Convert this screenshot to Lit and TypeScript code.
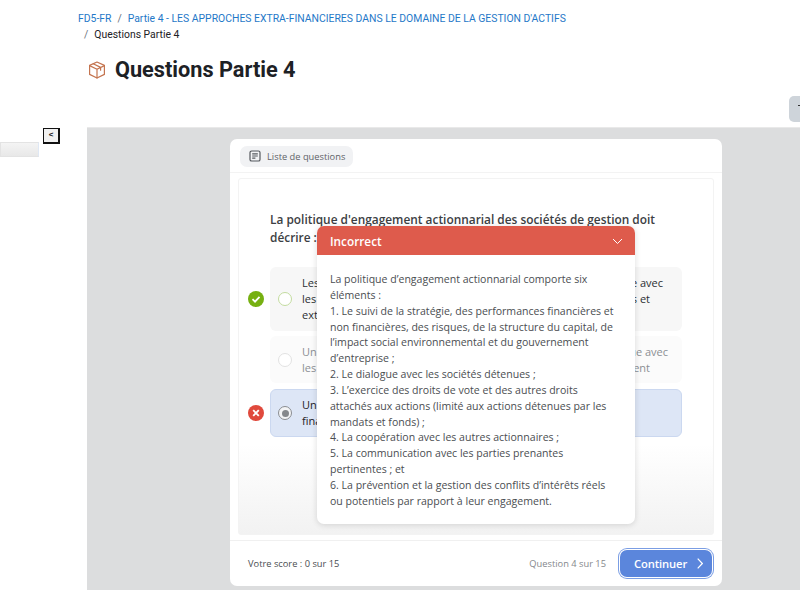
import { LitElement, html, css } from "lit";
import { customElement } from "lit/decorators.js";

@customElement("app-root")
export class AppRoot extends LitElement {
  static styles = css`
    :host { display: block; width: 800px; height: 590px; overflow: hidden; background: #fff; font-family: "Open Sans", "Noto Sans", sans-serif; color: #1d2125; }
    * { box-sizing: border-box; }
    .top { height: 127px; display: flex; flex-direction: column; }
    .crumbs { padding: 11px 0 0 78px; font-family: "Roboto", "Open Sans", sans-serif; font-size: 10.4px; line-height: 16px; }
    .crumbs a { color: #1f78c8; text-decoration: none; }
    .crumbs .sep { color: #6a737b; margin: 0 6px; }
    .crumbs .second { padding-left: 6px; color: #1d2125; }
    .crumbs .second .sep { margin: 0 6px 0 0; }
    .title { display: flex; align-items: center; gap: 9px; margin: 13px 0 0 88px; height: 28px; }
    .title svg { width: 18px; height: 18px; flex: none; margin-top: -1px; }
    h1 { margin: 0; font-family: "Roboto", "Open Sans", sans-serif; font-size: 21.7px; line-height: 28px; font-weight: 700; color: #1d2125; }
    .tools { display: flex; justify-content: flex-end; margin-top: 12px; }
    .toolbtn { width: 11px; height: 26px; background: #ced4da; border-radius: 5px 0 0 5px; display: flex; align-items: center; justify-content: flex-end; padding-bottom: 8px; }
    .toolbtn i { display: block; width: 2px; height: 1px; background: #333; }
    .main { display: flex; height: 463px; }
    .left { width: 87px; flex: none; display: flex; flex-direction: column; padding-top: 1px; }
    .collapse { width: 17px; height: 16px; margin-left: 43px; border: 1px solid #111; border-width: 1px 2px 2px 1px; background: #f1f1f1; font-size: 8px; line-height: 12px; text-align: center; color: #111; font-family: "Liberation Sans", sans-serif; font-weight: 700; }
    .bar { width: 39px; height: 15px; margin-top: -2px; background: linear-gradient(#f4f4f4, #e8e8e8); border: 1px solid #e3e3e3; border-right-color: #dfe8f5; }
    .frame { flex: 1; background: #dcddde; border-top: 1px solid #e9e9e9; padding: 11px 78px 0 143px; }
    .card { position: relative; width: 492px; height: 447px; background: #fff; border-radius: 7px; display: flex; flex-direction: column; }
    .head { height: 34px; flex: none; padding: 6px 10px 0; border-bottom: 1px solid #f3f3f3; }
    .pill { display: inline-flex; align-items: center; gap: 6px; height: 21px; width: 113px; padding-left: 9px; background: #f1f2f4; border-radius: 7px; font-size: 9.3px; color: #5f6368; }
    .pill svg { width: 12px; height: 12px; flex: none; }
    .body { height: 357px; margin: 5px 8px 0; border: 1px solid #f3f3f3; border-radius: 3px; background: linear-gradient(#fff 0, #fff 265px, #f2f2f2 100%); padding: 31px 31px 0 9px; flex: none; }
    .q { margin: 0 0 21px 22px; font-size: 11.88px; line-height: 18px; font-weight: 600; color: #3c4043; width: 400px; }
    .row { display: flex; align-items: center; gap: 6px; margin-bottom: 5px; }
    .row svg.st { width: 16px; height: 16px; flex: none; }
    .spacer { width: 16px; flex: none; }
    .opt { flex: 1; display: flex; align-items: center; gap: 10px; padding: 0 12px 0 8px; border-radius: 6px; background: #f7f7f7; font-size: 11px; line-height: 16px; color: #2c2f33; }
    .opt.o1 { height: 64px; }
    .opt.o2 { height: 47px; background: #fbfbfb; color: #8b8f94; }
    .opt.o3 { height: 48px; background: #dde6f6; border: 1px solid #cbd8f0; color: #1d2125; padding-left: 7px; margin-top: 1px; }
    .radio { width: 14px; height: 14px; border-radius: 50%; border: 1px solid #c3dc9f; flex: none; background: #fff; }
    .o2 .radio { border-color: #e2e2e2; }
    .o3 .radio { border: 1.5px solid #8a8d91; display: flex; align-items: center; justify-content: center; background: #f3f4f6; }
    .o3 .radio i { display: block; width: 7px; height: 7px; border-radius: 50%; background: #85888c; }
    .lines { flex: 1; }
    .line { display: flex; justify-content: space-between; height: 16px; }
    .pr2 { padding-right: 2px; }
    .pr7 { padding-right: 7px; }
    .pr20 { padding-right: 20px; }
    .foot { flex: 1; display: flex; align-items: center; padding: 0 10px 0 18px; font-size: 9.3px; color: #4a4d51; margin-top: 5px; border-top: 1px solid #f0f0f0; }
    .foot .count { margin-left: auto; margin-right: 14px; color: #85888c; }
    .btn { width: 92px; height: 27px; border-radius: 7px; box-shadow: 0 0 0 1px #fff, 0 0 0 2px #7b9ee4; background: #5b86dc; color: #fff; font-size: 11.2px; font-weight: 600; display: flex; align-items: center; padding-left: 14px; gap: 10px; letter-spacing: -0.1px; }
    .btn svg { width: 6px; height: 11px; }
    .pop { position: absolute; left: 87px; top: 87px; width: 318px; height: 298px; background: #fff; border-radius: 7px; box-shadow: 0 1px 6px rgba(0,0,0,0.14); overflow: hidden; }
    .pop .ph { height: 29px; background: #de5b4c; color: #fff; display: flex; align-items: center; justify-content: space-between; padding: 1px 12px 0 13px; font-size: 11.8px; font-weight: 600; }
    .pop .ph svg { width: 11px; height: 7px; }
    .pop .pb { padding: 17px 16px 0 13px; font-size: 10.55px; line-height: 15.85px; color: #4a4d51; }
  `;

  render() {
    return html`
      <div class="top">
        <div class="crumbs">
          <div><a>FD5-FR</a><span class="sep">/</span><a>Partie 4 - LES APPROCHES EXTRA-FINANCIERES DANS LE DOMAINE DE LA GESTION D'ACTIFS</a></div>
          <div class="second"><span class="sep">/</span>Questions Partie 4</div>
        </div>
        <div class="title">
          <svg viewBox="0 0 18 18" fill="none" stroke="#c4744f" stroke-width="1.2" stroke-linejoin="round" stroke-linecap="round">
            <path d="M9 1 16.4 4.4V13.4L9 17 1.6 13.4V4.4Z"/>
            <path d="M1.6 4.6 9 8.2 16.4 4.6M9 8.2V17M5.2 2.8 12.6 6.4V9.2"/>
          </svg>
          <h1>Questions Partie 4</h1>
        </div>
        <div class="tools"><div class="toolbtn"><i></i></div></div>
      </div>
      <div class="main">
        <div class="left">
          <div class="collapse">&lt;</div>
          <div class="bar"></div>
        </div>
        <div class="frame">
          <div class="card">
            <div class="head">
              <div class="pill">
                <svg viewBox="0 0 12 12" fill="none" stroke="#55595e" stroke-width="1.2">
                  <rect x="1" y="1" width="10" height="10" rx="1.6"/>
                  <path d="M3.2 3.8H8.8M3.2 6H8.8M3.2 8.2H6.4"/>
                </svg>
                Liste de questions
              </div>
            </div>
            <div class="body">
              <p class="q">La politique d'engagement actionnarial des sociétés de gestion doit décrire :</p>
              <div class="row">
                <svg class="st" viewBox="0 0 16 16"><circle cx="8" cy="8" r="8" fill="#76b011"/><path d="M4.5 8.2 7 10.6 11.5 5.8" fill="none" stroke="#fff" stroke-width="1.8"/></svg>
                <div class="opt o1"><span class="radio"></span>
                  <div class="lines">
                    <div class="line"><span>Les</span><span class="pr7">e avec</span></div>
                    <div class="line"><span>les</span><span class="pr20">s et</span></div>
                    <div class="line"><span>ext</span></div>
                  </div>
                </div>
              </div>
              <div class="row">
                <span class="spacer"></span>
                <div class="opt o2"><span class="radio"></span>
                  <div class="lines">
                    <div class="line"><span>Un</span><span class="pr2">ue avec</span></div>
                    <div class="line"><span>les</span><span class="pr20">ent</span></div>
                  </div>
                </div>
              </div>
              <div class="row">
                <svg class="st" viewBox="0 0 16 16"><circle cx="8" cy="8" r="8" fill="#e0493c"/><path d="M5.2 5.2 10.8 10.8M10.8 5.2 5.2 10.8" fill="none" stroke="#fff" stroke-width="1.9"/></svg>
                <div class="opt o3"><span class="radio"><i></i></span>
                  <div class="lines">
                    <div class="line"><span>Un</span></div>
                    <div class="line"><span>fina</span></div>
                  </div>
                </div>
              </div>
            </div>
            <div class="foot">
              <span>Votre score : 0 sur 15</span>
              <span class="count">Question 4 sur 15</span>
              <div class="btn">Continuer
                <svg viewBox="0 0 6 11" fill="none" stroke="#fff" stroke-width="1.2"><path d="M.7 .7 5.3 5.5 .7 10.3"/></svg>
              </div>
            </div>
            <div class="pop">
              <div class="ph">Incorrect
                <svg viewBox="0 0 11 7" fill="none" stroke="#fff" stroke-width="1"><path d="M1 1 5.5 5.5 10 1"/></svg>
              </div>
              <div class="pb">
                La politique d’engagement actionnarial comporte six éléments :<br>
                1. Le suivi de la stratégie, des performances financières et non financières, des risques, de la structure du capital, de l’impact social environnemental et du gouvernement d’entreprise ;<br>
                2. Le dialogue avec les sociétés détenues ;<br>
                3. L’exercice des droits de vote et des autres droits attachés aux actions (limité aux actions détenues par les mandats et fonds) ;<br>
                4. La coopération avec les autres actionnaires ;<br>
                5. La communication avec les parties prenantes pertinentes ; et<br>
                6. La prévention et la gestion des conflits d’intérêts réels ou potentiels par rapport à leur engagement.
              </div>
            </div>
          </div>
        </div>
      </div>
    `;
  }
}
